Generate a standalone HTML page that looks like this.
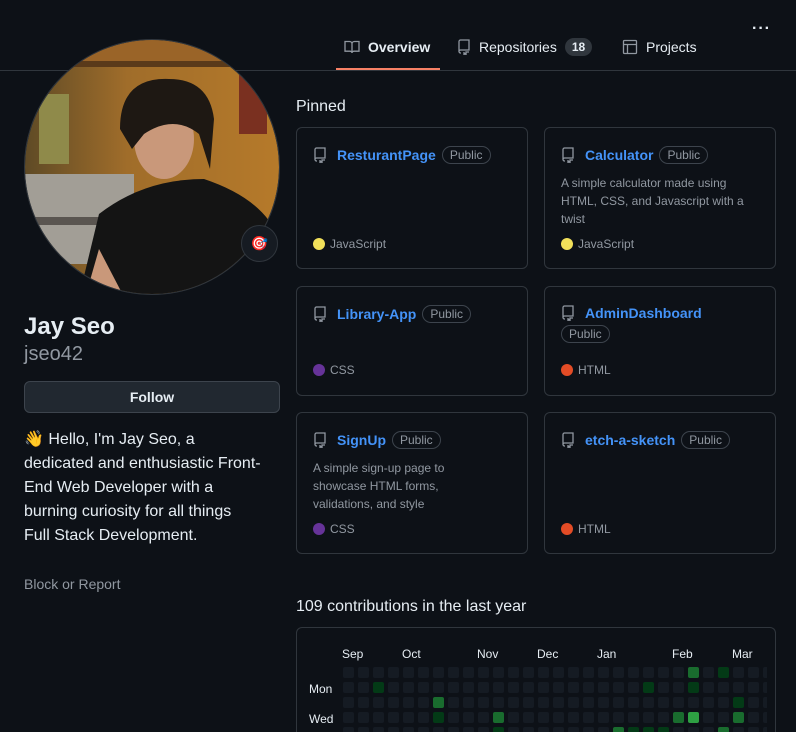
<!DOCTYPE html>
<html style="overflow:hidden;height:732px"><head><meta charset="utf-8"><style>
*{box-sizing:border-box;margin:0;padding:0}
body{width:796px;height:732px;overflow:hidden;background:#0d1117;color:#e6edf3;font-family:"Liberation Sans",sans-serif;position:relative}
.abs{position:absolute}
.hline{position:absolute;left:0;right:0;top:70px;height:1px;background:#30363d}
.tab{position:absolute;top:38px;font-size:14px;color:#e6edf3;display:flex;align-items:center;gap:8px}
.card{position:absolute;width:232px;border:1px solid #30363d;border-radius:6px;background:#0d1117}
.card .t{position:absolute;left:16px;top:18px;display:flex;align-items:center;flex-wrap:wrap;gap:6px;width:205px}
.card a{color:#4493f8;font-weight:bold;font-size:14px;text-decoration:none;margin-left:4px}
.pub{border:1px solid #3d444d;border-radius:10px;color:#9198a1;font-size:12px;padding:1px 7px}
.desc{position:absolute;left:16px;top:46px;width:200px;font-size:12px;color:#9198a1;line-height:18px}
.lang{position:absolute;left:16px;font-size:12px;color:#9198a1;display:flex;align-items:center;gap:5px}
.dot{width:12px;height:12px;border-radius:50%}
.ri{width:14px;height:16px}
</style></head><body>
<div class="hline"></div>
<div class="abs" style="left:336px;top:68px;width:104px;height:2px;background:#f78166"></div>
<div class="tab" style="left:344px;top:39px"><svg width="16" height="16" viewBox="0 0 16 16" fill="none" stroke="#9198a1" stroke-width="1.3"><path d="M1 2.5h4.5c1.4 0 2.5 1 2.5 2.3V14c0-1-1-1.8-2.2-1.8H1z M15 2.5h-4.5C9.1 2.5 8 3.5 8 4.8V14c0-1 1-1.8 2.2-1.8H15z"/></svg><b>Overview</b></div>
<div class="tab" style="left:457px;top:38px"><svg class="ri" viewBox="0 0 14 16" fill="none" stroke="#9198a1" stroke-width="1.3"><path d="M2 13V2.5C2 1.7 2.7 1 3.5 1H12v10H3.5C2.7 11 2 11.7 2 12.5s.7 1.5 1.5 1.5H4 M7 13v2.5l1-.8 1 .8V13h3"/></svg>Repositories<span style="background:#30363d;border-radius:10px;padding:2px 7px;font-size:12px;font-weight:bold">18</span></div>
<div class="tab" style="left:622px;top:39px"><svg width="16" height="16" viewBox="0 0 16 16" fill="none" stroke="#9198a1" stroke-width="1.3"><rect x="1.5" y="1.5" width="13" height="13" rx="1"/><path d="M1.5 5.5h13M5.5 5.5v9"/></svg>Projects</div>
<div class="abs" style="left:752px;top:20px;font-size:16px;letter-spacing:1px;color:#e6edf3;font-weight:bold">···</div>

<svg class="abs" style="left:24px;top:39px" width="258" height="258" viewBox="0 0 258 258">
<defs><clipPath id="c"><circle cx="128" cy="128" r="127"/></clipPath>
<linearGradient id="bg" x1="0" y1="0" x2="1" y2="0"><stop offset="0" stop-color="#5e4a26"/><stop offset="0.4" stop-color="#a06d2a"/><stop offset="1" stop-color="#b67a2a"/></linearGradient></defs>
<g clip-path="url(#c)">
<rect width="258" height="258" fill="url(#bg)"/>
<rect x="0" y="0" width="258" height="22" fill="#9a6428"/>
<rect x="0" y="22" width="258" height="6" fill="#5a3a1a"/>
<rect x="15" y="55" width="30" height="70" fill="#8f8a4a"/>
<rect x="0" y="135" width="110" height="90" fill="#a29e96"/>
<rect x="0" y="178" width="100" height="8" fill="#5a5550"/>
<rect x="215" y="35" width="28" height="60" fill="#7a3020"/>
<path d="M55 258 L75 175 Q120 140 180 140 Q240 160 255 200 L258 258Z" fill="#141414"/>
<path d="M100 258 L65 245 L75 210Z" fill="#c9987a"/>
<ellipse cx="140" cy="100" rx="30" ry="40" fill="#c9987a"/>
<path d="M96 90 Q96 38 145 40 Q185 40 190 80 L186 130 L175 95 Q150 75 120 95 L108 110Z" fill="#1e1813"/>
</g>
<circle cx="128" cy="128" r="127.5" fill="none" stroke="#30363d"/>
</svg>
<div class="abs" style="left:241px;top:225px;width:37px;height:37px;border-radius:50%;background:#161b22;border:1px solid #30363d;text-align:center;line-height:35px;font-size:14px">🎯</div>

<div class="abs" style="left:24px;top:313px;font-size:24px;font-weight:bold;color:#e6edf3">Jay Seo</div>
<div class="abs" style="left:24px;top:343px;font-size:20px;color:#9198a1">jseo42</div>
<div class="abs" style="left:24px;top:381px;width:256px;height:32px;border:1px solid #3d444d;border-radius:6px;background:#212830;text-align:center;line-height:30px;font-size:14px;font-weight:bold">Follow</div>
<div class="abs" style="left:24px;top:428px;width:270px;font-size:16px;line-height:24px;color:#e6edf3;white-space:nowrap">👋 Hello, I'm Jay Seo, a<br>dedicated and enthusiastic Front-<br>End Web Developer with a<br>burning curiosity for all things<br>Full Stack Development.</div>
<div class="abs" style="left:24px;top:576px;font-size:14px;color:#9198a1">Block or Report</div>

<div class="abs" style="left:296px;top:98px;font-size:16px">Pinned</div>

<div class="card" style="left:296px;top:127px;height:142px"><div class="t"><svg class="ri" viewBox="0 0 14 16" fill="none" stroke="#9198a1" stroke-width="1.3"><path d="M2 13V2.5C2 1.7 2.7 1 3.5 1H12v10H3.5C2.7 11 2 11.7 2 12.5s.7 1.5 1.5 1.5H4 M7 13v2.5l1-.8 1 .8V13h3"/></svg><a>ResturantPage</a><span class="pub">Public</span></div><div class="lang" style="top:109px"><span class="dot" style="background:#f1e05a"></span>JavaScript</div></div>
<div class="card" style="left:544px;top:127px;height:142px"><div class="t"><svg class="ri" viewBox="0 0 14 16" fill="none" stroke="#9198a1" stroke-width="1.3"><path d="M2 13V2.5C2 1.7 2.7 1 3.5 1H12v10H3.5C2.7 11 2 11.7 2 12.5s.7 1.5 1.5 1.5H4 M7 13v2.5l1-.8 1 .8V13h3"/></svg><a>Calculator</a><span class="pub">Public</span></div><div class="desc">A simple calculator made using<br>HTML, CSS, and Javascript with a<br>twist</div><div class="lang" style="top:109px"><span class="dot" style="background:#f1e05a"></span>JavaScript</div></div>
<div class="card" style="left:296px;top:286px;height:110px"><div class="t"><svg class="ri" viewBox="0 0 14 16" fill="none" stroke="#9198a1" stroke-width="1.3"><path d="M2 13V2.5C2 1.7 2.7 1 3.5 1H12v10H3.5C2.7 11 2 11.7 2 12.5s.7 1.5 1.5 1.5H4 M7 13v2.5l1-.8 1 .8V13h3"/></svg><a>Library-App</a><span class="pub">Public</span></div><div class="lang" style="top:76px"><span class="dot" style="background:#663399"></span>CSS</div></div>
<div class="card" style="left:544px;top:286px;height:110px"><div class="t" style="width:180px;gap:4px 6px"><svg class="ri" viewBox="0 0 14 16" fill="none" stroke="#9198a1" stroke-width="1.3"><path d="M2 13V2.5C2 1.7 2.7 1 3.5 1H12v10H3.5C2.7 11 2 11.7 2 12.5s.7 1.5 1.5 1.5H4 M7 13v2.5l1-.8 1 .8V13h3"/></svg><a>AdminDashboard</a><span class="pub" style="margin-left:0">Public</span></div><div class="lang" style="top:76px"><span class="dot" style="background:#e34c26"></span>HTML</div></div>
<div class="card" style="left:296px;top:412px;height:142px"><div class="t"><svg class="ri" viewBox="0 0 14 16" fill="none" stroke="#9198a1" stroke-width="1.3"><path d="M2 13V2.5C2 1.7 2.7 1 3.5 1H12v10H3.5C2.7 11 2 11.7 2 12.5s.7 1.5 1.5 1.5H4 M7 13v2.5l1-.8 1 .8V13h3"/></svg><a>SignUp</a><span class="pub">Public</span></div><div class="desc">A simple sign-up page to<br>showcase HTML forms,<br>validations, and style</div><div class="lang" style="top:109px"><span class="dot" style="background:#663399"></span>CSS</div></div>
<div class="card" style="left:544px;top:412px;height:142px"><div class="t"><svg class="ri" viewBox="0 0 14 16" fill="none" stroke="#9198a1" stroke-width="1.3"><path d="M2 13V2.5C2 1.7 2.7 1 3.5 1H12v10H3.5C2.7 11 2 11.7 2 12.5s.7 1.5 1.5 1.5H4 M7 13v2.5l1-.8 1 .8V13h3"/></svg><a>etch-a-sketch</a><span class="pub">Public</span></div><div class="lang" style="top:109px"><span class="dot" style="background:#e34c26"></span>HTML</div></div>

<div class="abs" style="left:296px;top:598px;font-size:16px">109 contributions in the last year</div>
<div class="abs" style="left:296px;top:627px;width:480px;height:105px;border:1px solid #30363d;border-bottom:none;border-radius:6px 6px 0 0;overflow:hidden">
<div id="g" style="position:absolute;left:46px;top:39px;width:424px;height:70px;overflow:hidden"></div>
</div>
<div class="abs" style="left:342px;top:647px;font-size:12px;width:430px">
<span class="abs" style="left:0">Sep</span><span class="abs" style="left:60px">Oct</span><span class="abs" style="left:135px">Nov</span><span class="abs" style="left:195px">Dec</span><span class="abs" style="left:255px">Jan</span><span class="abs" style="left:330px">Feb</span><span class="abs" style="left:390px">Mar</span></div>
<div class="abs" style="left:309px;top:682px;font-size:12px">Mon</div>
<div class="abs" style="left:309px;top:712px;font-size:12px">Wed</div>
<script>
var m={"0,23":2,"0,25":1,"1,2":1,"1,20":1,"1,23":1,"2,6":2,"2,26":1,"3,6":1,"3,10":2,"3,22":2,"3,23":3,"3,26":2,"4,10":1,"4,18":2,"4,19":1,"4,20":1,"4,21":1,"4,25":2};
var c=["#151b23","#033a16","#196c2e","#2ea043","#56d364"],h="";
for(var r=0;r<5;r++)for(var k=0;k<29;k++){var v=m[r+","+k]||0;h+='<div style="position:absolute;left:'+(k*15)+'px;top:'+(r*15)+'px;width:11px;height:11px;border-radius:2px;background:'+c[v]+'"></div>';}
document.getElementById("g").innerHTML=h;
</script>
</body></html>
